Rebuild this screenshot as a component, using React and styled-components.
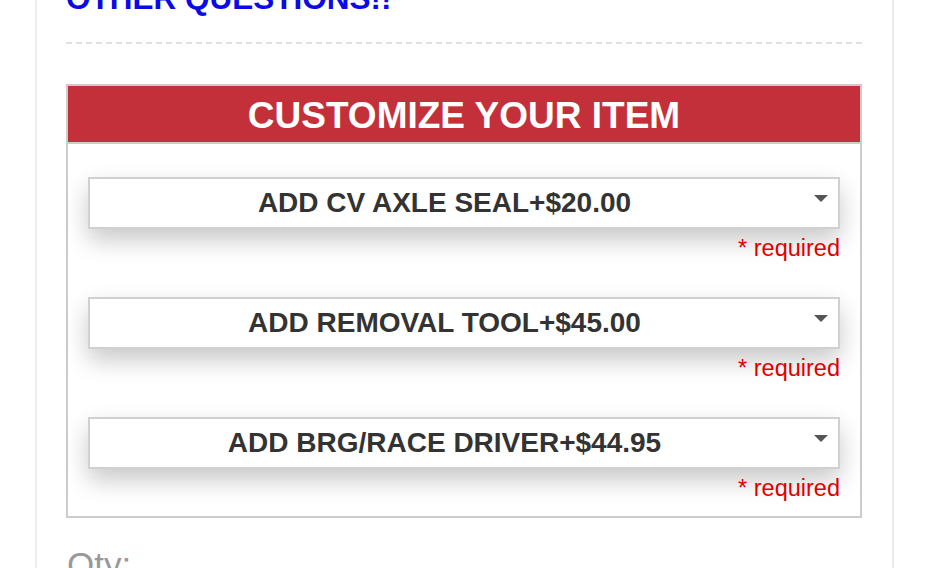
import React from "react";
import styled, { createGlobalStyle } from "styled-components";

const Global = createGlobalStyle`
  html, body { margin: 0; padding: 0; background: #fff; overflow: hidden; }
  body { font-family: "Liberation Sans", Arial, Helvetica, sans-serif; }
`;

const Page = styled.div`
  margin-left: 35px;
  width: 859px;
  height: 568px;
  border-left: 2px solid #ececec;
  border-right: 2px solid #ececec;
  padding: 0 30px 0 29px;
  box-sizing: border-box;
  overflow: hidden;
`;

const Heading = styled.h2`
  margin: -17px 0 0;
  font-size: 31.5px;
  line-height: 31px;
  font-weight: 700;
  color: #0a0ae6;
  padding-bottom: 28px;
  border-bottom: 2px dashed #e0e0e0;
  white-space: nowrap;
`;

const Box = styled.section`
  margin-top: 40px;
  border: 2px solid #cccccc;
  background: #fff;
`;

const BoxHeader = styled.div`
  box-sizing: content-box;
  height: 53px;
  padding-top: 3px;
  line-height: 53px;
  background: #c4303a;
  color: #fff;
  font-size: 37px;
  font-weight: 700;
  text-align: center;
  border-bottom: 2px solid #cccccc;
`;

const BoxBody = styled.div`
  padding: 33px 20px 15px;
  display: flex;
  flex-direction: column;
  gap: 36px;
`;

const Field = styled.div`
  display: flex;
  flex-direction: column;
`;

const Select = styled.div`
  height: 52px;
  box-sizing: border-box;
  border: 2px solid #d0d0d0;
  background: #fff;
  box-shadow: 0 11px 24px rgba(0, 0, 0, 0.22);
  display: flex;
  align-items: center;
  padding-right: 10px;
  gap: 15px;
`;

const SelectLabel = styled.span`
  flex: 1;
  text-align: center;
  font-size: 28px;
  font-weight: 700;
  color: #333;
  white-space: nowrap;
`;

const Caret = styled.svg`
  align-self: flex-start;
  margin-top: 16px;
  flex: none;
`;

const Required = styled.div`
  margin-top: 6px;
  text-align: right;
  font-size: 23.5px;
  line-height: 26px;
  color: #e00000;
`;

const Qty = styled.div`
  margin-top: 26px;
  margin-left: 1px;
  font-size: 35px;
  line-height: 42px;
  color: #999;
`;

const options = [
  "ADD CV AXLE SEAL+$20.00",
  "ADD REMOVAL TOOL+$45.00",
  "ADD BRG/RACE DRIVER+$44.95",
];

export default function App() {
  return (
    <>
      <Global />
      <Page>
        <Heading>OTHER QUESTIONS!!</Heading>
        <Box>
          <BoxHeader>CUSTOMIZE YOUR ITEM</BoxHeader>
          <BoxBody>
            {options.map((o) => (
              <Field key={o}>
                <Select>
                  <SelectLabel>{o}</SelectLabel>
                  <Caret width="14" height="7" viewBox="0 0 14 7">
                    <path d="M0 0 H14 L7 7 Z" fill="#555" />
                  </Caret>
                </Select>
                <Required>* required</Required>
              </Field>
            ))}
          </BoxBody>
        </Box>
        <Qty>Qty:</Qty>
      </Page>
    </>
  );
}
